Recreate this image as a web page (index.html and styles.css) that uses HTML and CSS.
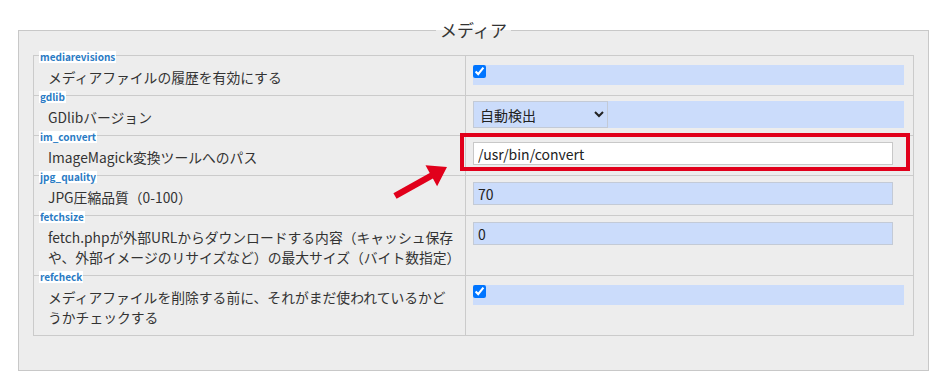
FILE: index.html
```html
<!DOCTYPE html>
<html lang="ja">
<head>
    <meta charset="UTF-8">
    <title>設定 - メディア</title>
    <link rel="stylesheet" href="styles.css">
</head>
<body>

<fieldset class="section">
    <legend>メディア</legend>
    <table class="conf">
        <tr>
            <td class="label"><span class="key">mediarevisions</span>メディアファイルの履歴を有効にする</td>
            <td class="value"><div class="bar"><input type="checkbox" checked></div></td>
        </tr>
        <tr>
            <td class="label"><span class="key">gdlib</span>GDlibバージョン</td>
            <td class="value">
                <div class="bar">
                    <select class="pick">
                        <option>自動検出</option>
                        <option>1</option>
                        <option>2</option>
                    </select>
                </div>
            </td>
        </tr>
        <tr>
            <td class="label"><span class="key">im_convert</span>ImageMagick変換ツールへのパス</td>
            <td class="value"><input type="text" class="edit plain" value="/usr/bin/convert"></td>
        </tr>
        <tr>
            <td class="label"><span class="key">jpg_quality</span>JPG圧縮品質（0-100）</td>
            <td class="value"><input type="text" class="edit" value="70"></td>
        </tr>
        <tr>
            <td class="label"><span class="key">fetchsize</span>fetch.phpが外部URLからダウンロードする内容（キャッシュ保存や、外部イメージのリサイズなど）の最大サイズ（バイト数指定）</td>
            <td class="value"><input type="text" class="edit" value="0"></td>
        </tr>
        <tr>
            <td class="label"><span class="key">refcheck</span>メディアファイルを削除する前に、それがまだ使われているかどうかチェックする</td>
            <td class="value"><div class="bar"><input type="checkbox" checked></div></td>
        </tr>
    </table>
</fieldset>

<!-- annotation drawn over the screenshot -->
<svg class="annot" width="949" height="388" viewBox="0 0 949 388">
    <rect x="462" y="135" width="446" height="34" fill="none" stroke="#e1001b" stroke-width="4"/>
    <polygon fill="#e1001b" points="393.4,193.2 429.7,173 425.5,165.3 447,167 437.1,186.3 432.9,178.6 396.6,198.8"/>
</svg>

</body>
</html>
```

FILE: styles.css
```css
* {
    box-sizing: border-box;
}
body {
    margin: 0;
    padding: 17px 20px 0 18px;
    background-color: white;
    font-family: "Noto Sans CJK JP", "Noto Sans", sans-serif;
    color: #333;
    position: relative;
}
.section {
    margin: 0;
    width: 911px;
    border: 1px solid #c8c8c8;
    background-color: #ededed;
    padding: 12px 14px 34px 14px;
}
.section legend {
    margin: 0 auto;
    padding: 0 4px;
    font-size: 17px;
    line-height: 26px;
    color: #333;
}
table.conf {
    width: 881px;
    border-collapse: collapse;
    table-layout: fixed;
}
table.conf td {
    border: 1px solid #cbcbcb;
    vertical-align: top;
}
td.label {
    width: 432px;
    position: relative;
    padding: 11px 7px 8px 14px;
    font-size: 13.8px;
    line-height: 20px;
}
.key {
    position: absolute;
    left: 5px;
    top: -5px;
    background-color: white;
    padding: 0 1px;
    font-size: 10px;
    line-height: 12px;
    font-weight: bold;
    color: #2a7bc4;
}
td.value {
    padding: 5px 9px 0 7px;
}
.bar {
    background-color: #cbdcfb;
    min-height: 20px;
}
.bar input[type="checkbox"] {
    margin: 4px 0 3px 0;
    width: 13px;
    height: 13px;
    display: block;
}
select.pick {
    width: 135px;
    height: 27px;
    font-family: inherit;
    font-size: 14px;
    color: #222;
    background-color: #cbdcfb;
    border: 1px solid #c3cad6;
    padding: 0 2px;
    display: block;
}
input.edit {
    display: block;
    margin-top: 1px;
    width: 420px;
    height: 23px;
    padding: 0 4px;
    font-family: inherit;
    font-size: 14px;
    color: #222;
    background-color: #cbdcfb;
    border: 1px solid #c3cad6;
}
input.edit.plain {
    background-color: white;
    border-color: #c8c8c8;
}
.annot {
    position: absolute;
    left: 0;
    top: 0;
    pointer-events: none;
}
```
